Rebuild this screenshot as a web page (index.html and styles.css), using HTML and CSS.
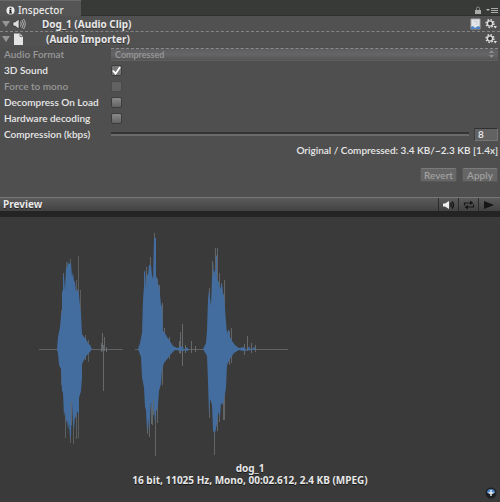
FILE: index.html
```html
<!DOCTYPE html>
<html lang="en">
<head>
<meta charset="utf-8">
<title>Inspector</title>
<link rel="stylesheet" href="styles.css">
</head>
<body>
<main class="inspector">
  <header class="tabs">
    <h1 class="tab">
      <svg class="info" viewBox="0 0 10 10" aria-hidden="true"><circle cx="5" cy="5" r="4.500" fill="#eee"/><path d="M4 2h2v1.500H4zM3.500 4.200H6v3h.7v1H3.400v-1H4V5h-.5z" fill="#222"/></svg>
      Inspector
    </h1>
    <div class="tab-tools">
      <button class="icon-button" aria-label="Lock"><svg width="8" height="9" viewBox="0 0 8 9"><path d="M2.500 4V2.500Q2.500 1 4 1t1.500 1.500V4" fill="none" stroke="#888"/><path d="M1 4h6v4H1z" fill="#aaa"/></svg></button>
      <button class="icon-button" aria-label="Menu"><svg width="12" height="9" viewBox="0 0 12 9"><path d="M0 3h4L2 5z" fill="#bbb"/><path d="M5 2.500h7M5 4.500h7M5 6.500h7" stroke="#aaa"/></svg></button>
    </div>
  </header>

  <section class="component">
    <button class="icon-button" aria-label="Fold audio clip"><svg width="8" height="8" viewBox="0 0 8 8"><path d="M0 1h8L4 7z" fill="#969696"/></svg></button>
    <svg class="kind" viewBox="0 0 14 14" aria-hidden="true"><path d="M1 5h2l4-3v10L3 9H1z" fill="#ddd" stroke="#222" stroke-width=".6"/><path d="M8.500 4.500q1.500 2.500 0 5M10 3q3 4 0 8M11.500 2q3.500 5 0 10" fill="none" stroke="#ccc" stroke-width=".8"/></svg>
    <h2 class="component-name">Dog_1 (Audio Clip)</h2>
    <button class="icon-button" aria-label="Help"><svg width="11" height="12" viewBox="0 0 11 12"><path d="M1 1h9v10H1z" fill="#e3e6e8" stroke="#aaa"/><path d="M1 11V9l2-1 2 2 3-2 2 1v2z" fill="#4c83c5"/><path d="M4 3.500h3v2L5.500 7" fill="none" stroke="#c4ccd6"/></svg></button>
    <button class="icon-button" aria-label="Audio clip settings"><svg width="12" height="12" viewBox="0 0 12 12"><circle cx="5" cy="5.500" r="3.900" fill="none" stroke="#ddd" stroke-width="1.500" stroke-dasharray="1.500 1.563"/><circle cx="5" cy="5.500" r="2.600" fill="#333" stroke="#ddd" stroke-width="1.400"/><path d="M8.500 8H12l-1.700 2.500z" fill="#ddd"/></svg></button>
  </section>

  <section class="component ruled">
    <button class="icon-button" aria-label="Fold audio importer"><svg width="8" height="8" viewBox="0 0 8 8"><path d="M0 1h8L4 7z" fill="#969696"/></svg></button>
    <svg class="kind" viewBox="0 0 14 14" aria-hidden="true"><path d="M2 1.500h6l3 3V13H2z" fill="#e4e4e4"/><path d="M8 1.500v3h3" fill="none" stroke="#777"/></svg>
    <h2 class="component-name importer">(Audio Importer)</h2>
    <button class="icon-button" aria-label="Importer settings"><svg width="12" height="12" viewBox="0 0 12 12"><circle cx="5" cy="5.500" r="3.900" fill="none" stroke="#ddd" stroke-width="1.500" stroke-dasharray="1.500 1.563"/><circle cx="5" cy="5.500" r="2.600" fill="#333" stroke="#ddd" stroke-width="1.400"/><path d="M8.500 8H12l-1.700 2.500z" fill="#ddd"/></svg></button>
  </section>

  <form class="settings">
    <div class="row off"><label for="format">Audio Format</label><div class="select-box"><select id="format" disabled><option>Compressed</option></select><svg width="5" height="8" viewBox="0 0 5 8" aria-hidden="true"><path d="M0 3l2.500-3L5 3zM0 5h5L2.500 8z" fill="#8d8d8d"/></svg></div></div>
    <div class="row"><label for="sound3d">3D Sound</label><input type="checkbox" id="sound3d" checked></div>
    <div class="row off"><label for="mono">Force to mono</label><input type="checkbox" id="mono" disabled></div>
    <div class="row"><label for="decompress">Decompress On Load</label><input type="checkbox" id="decompress"></div>
    <div class="row"><label for="hardware">Hardware decoding</label><input type="checkbox" id="hardware"></div>
    <div class="row"><label for="rate">Compression (kbps)</label><input type="range" id="rate"><input type="text" class="number" aria-label="Compression value" value="8"></div>
    <p class="sizes">Original / Compressed: 3.4 KB/~2.3 KB [1.4x]</p>
    <div class="actions"><button type="button" disabled>Revert</button><button type="button" disabled>Apply</button></div>
  </form>

  <section class="preview">
    <header class="preview-bar">
      <h2>Preview</h2>
      <button aria-label="Auto play"><svg width="12" height="10" viewBox="0 0 12 10"><path d="M0 3.500h2L6 1v8L2 6.500H0z" fill="#eee"/><path d="M7.500 3q1.500 2 0 4M9 1.500q3 3.500 0 7" fill="none" stroke="#111" stroke-width="1.300"/></svg></button>
      <button aria-label="Loop"><svg width="12" height="10" viewBox="0 0 12 10"><path d="M1.500 5.500V3H7M10.500 4.500V7H5" fill="none" stroke="#161616" stroke-width="1.200"/><path d="M7 .5L10.500 3 7 5zM5 5L1.500 7 5 9.500z" fill="#161616"/></svg></button>
      <button aria-label="Play"><svg width="10" height="10" viewBox="0 0 10 10"><path d="M0 1l10 4-10 4z" fill="#161616"/></svg></button>
    </header>
    <div class="stage">
      <svg class="wave" viewBox="0 217 500 243" role="img" aria-label="Waveform of dog_1">
        <g fill="none" stroke="#73777a" stroke-width="1">
          <path d="M39 349.500h84M135 349.500h153" opacity=".65"/>
          <path d="M78.500 256v40M66.500 262v30M70.500 259v20M63.500 273v50M76.500 280v20M65.500 400v38M70.500 410v33M73.500 405v39M76.500 405v34M78.500 400v38M85.500 335v25M88.500 340v22M61.500 310v75M80.500 290v100" opacity=".6"/>
          <path d="M103.500 345v46M102.500 333v18M104.500 337v14M101.500 343v9M106.500 347v5" opacity=".8"/>
          <path d="M154.500 233v65M150.500 257v20M146.500 267v20M157.500 279v20M159.500 285v35M162.500 303v82M147.500 400v34M149.500 405v32M152.500 390v35M155.500 400v56M157.500 393v30M164.500 328v34M169.500 337v22" opacity=".7"/>
          <path d="M182.500 324v42M180.500 332v22M179.500 341v12M185.500 345v8M191.500 341v12M195.500 346v6" opacity=".8"/>
          <path d="M215.500 248v40M217.500 248v35M212.500 261v35M219.500 273v25M224.500 280v140M209.500 288v130M221.500 283v20M214.500 420v35M217.500 400v31M219.500 400v22M231.500 328v35M229.500 331v34M223.500 390v30" opacity=".7"/>
          <path d="M247.500 336v15M244.500 344v11M251.500 343v10M255.500 345v7" opacity=".8"/>
        </g>
        <g fill="#436c9f">
          <path d="M57 349L58 337 60 327 61 316 62 310 62 292 63 290 63 274 64 276 65 290 66 267 67 268 68 261 69 264 71 263 72 277 73 272 74 281 75 282 76 292 78 289 79 295 80 306 81 313 82 334 84 337 86 339 88 343 90 345 92 349 90 352 87 355 84 360 82 364 82 378 81 391 79 398 79 415 77 411 76 419 75 416 74 429 73 425 72 402 71 436 70 438 69 423 68 430 67 420 66 423 65 411 64 417 63 393 62 391 61 369 59 365 58 354z"/>
          <path d="M138 349L140 343 142 333 143 300 144 286 144 272 145 270 146 288 147 274 148 275 149 265 151 265 152 275 153 279 154 238 156 238 156 278 157 276 158 287 159 283 160 295 161 304 162 307 163 331 165 333 167 337 170 341 173 346 177 348 183 346 184 351 187 347 189 350 193 348 187 351 182 351 175 350 171 354 168 358 164 363 162 370 161 384 159 391 158 405 156 413 155 423 154 409 152 410 151 402 150 417 149 432 148 418 147 431 146 410 145 407 144 388 142 377 141 357z"/>
          <path d="M203 349L206 343 207 330 208 299 209 290 210 297 211 306 212 277 213 274 213 261 214 273 216 268 216 255 217 256 217 278 219 283 220 289 222 283 223 293 224 295 225 308 226 322 227 333 229 329 230 337 232 341 235 345 239 348 244 347 247 351 249 346 251 350 254 347 256 349 253 350 243 351 239 350 234 353 230 359 227 365 226 388 224 400 223 405 221 403 220 417 218 412 217 424 215 433 213 431 212 405 210 399 209 415 208 382 207 356z"/>
        </g>
        <g stroke="#5d6870" stroke-width="1"><path d="M71.500 402v23M151.500 405v19M153.500 400v15"/></g>
      </svg>
      <p class="caption">dog_1<br>16 bit, 11025 Hz, Mono, 00:02.612, 2.4 KB (MPEG)</p>
      <button class="icon-button corner" aria-label="Asset labels"><svg width="12" height="12" viewBox="0 0 12 12"><circle cx="6" cy="6" r="5.500" fill="#1c2023"/><path d="M2 6a4 4 0 0 1 8 0z" fill="#4d86c8"/><path d="M6 3v6M3.500 6h5" stroke="#e8edf2" stroke-width="1.400"/></svg></button>
    </div>
  </section>
</main>
</body>
</html>
```
FILE: styles.css
```css
* { box-sizing: border-box; }
body {
  margin: 0;
  background: #393a39;
  color: #e8e8e8;
  font: 10px/16px "Noto Sans", "Open Sans", sans-serif;
}
h1, h2, p { margin: 0; font-size: inherit; }
button, input, select { font: inherit; color: inherit; margin: 0; }
svg { display: block; flex: none; }
.inspector { min-height: 100vh; display: flex; flex-direction: column; background: #4f4f4f; }
.icon-button { padding: 0; border: 0; background: none; }

.tabs { display: flex; justify-content: space-between; height: 16px; background: #383a38; border-bottom: 1px solid #303030; }
.tab { display: flex; align-items: center; gap: 3px; width: 81px; padding: 3px 0 0 6px; height: 16px; background: #555; border-top: 1px solid #696969; font: 500 10px/12px "Noto Sans", sans-serif; }
.info { width: 9px; height: 9px; }
.tab-tools { display: flex; align-items: flex-end; gap: 4px; padding: 0 2px 0 0; }

.component { display: flex; align-items: center; height: 15px; padding: 0 3px 0 2px; background: #515151; }
.component .icon-button + .icon-button { margin-left: 4px; }
.ruled { border-top: 1px dashed #858585; }
.kind { width: 14px; height: 14px; margin-left: 2px; }
.component-name { flex: 1; padding-left: 16px; font-weight: 700; text-shadow: 0 1px #333; }
.importer { padding-left: 20px; }

.settings { padding: 0 2px; font-family: Lato, "Noto Sans", sans-serif; font-weight: 600; }
.row { display: flex; align-items: center; height: 16px; }
.row label { width: 109px; padding-left: 2px; flex: none; white-space: nowrap; }
.off { color: #989898; }
.select-box { flex: 1; display: flex; align-items: center; height: 13px; padding-right: 4px; background: linear-gradient(#5e5e60, #656568 50%, #555); border-top: 1px dashed #8b8b8b; border-bottom: 1px solid #5f5f5f; }
.select-box select { flex: 1; height: 11px; padding: 0 4px; border: 0; background: none; font-size: 9px; line-height: 11px; appearance: none; color: #999; opacity: 1; }
input[type="checkbox"] { appearance: none; width: 11px; height: 11px; margin-left: 0; border: 1px solid #3d3d3d; border-radius: 2px; background: linear-gradient(#8b8b8b, #626262); }
input[type="checkbox"]:disabled { border-color: #4a4a4a; background: #626262; }
input[type="checkbox"]:checked { background: #777 url("data:image/svg+xml,%3Csvg xmlns='http://www.w3.org/2000/svg' viewBox='0 0 10 10'%3E%3Cpath d='M1 5l3 3.500L9 1' fill='none' stroke='white' stroke-width='2'/%3E%3C/svg%3E") center / 9px 9px no-repeat; }
input[type="range"] { appearance: none; flex: 1; min-width: 0; height: 5px; background: #6a6a6a; border-top: 2px solid #343434; border-bottom: 1px solid #4f4f4f; }
input[type="range"]::-webkit-slider-thumb { appearance: none; width: 0; height: 0; }
.number { width: 24px; height: 13px; margin-left: 5px; padding: 0 3px; border: 1px solid #747474; border-top-color: #303030; border-left-color: #3c3c3c; background: #626262; line-height: 11px; }
.sizes { text-align: right; }
.actions { display: flex; justify-content: flex-end; gap: 5px; padding: 10px 0 15px; }
.actions button { height: 14px; min-width: 36px; padding: 0 3px; border: 1px solid #575757; border-top-color: #7a7a7a; border-radius: 2px; background: #666; color: #a0a0a0; line-height: 12px; }

.preview { flex: 1; display: flex; flex-direction: column; background: #393a39; }
.preview-bar { display: flex; height: 14px; padding-right: 2px; background: linear-gradient(#5b5b5b, #424242); border-top: 1px solid #777; }
.preview-bar h2 { flex: 1; padding-left: 3px; line-height: 13px; text-shadow: 0 1px #222; }
.preview-bar button { display: grid; place-items: center; width: 20px; padding: 0; border: 0; border-left: 1px solid #2b2b2b; background: none; }
.stage { flex: 1; display: flex; flex-direction: column; position: relative; border-top: 6px solid #242424; }
.wave { width: 100%; }
.caption { text-align: center; font-weight: 700; line-height: 12px; padding: 2px 0 14px; text-shadow: 0 1px #181818; }
.corner { position: absolute; right: 3px; bottom: 3px; }
```
